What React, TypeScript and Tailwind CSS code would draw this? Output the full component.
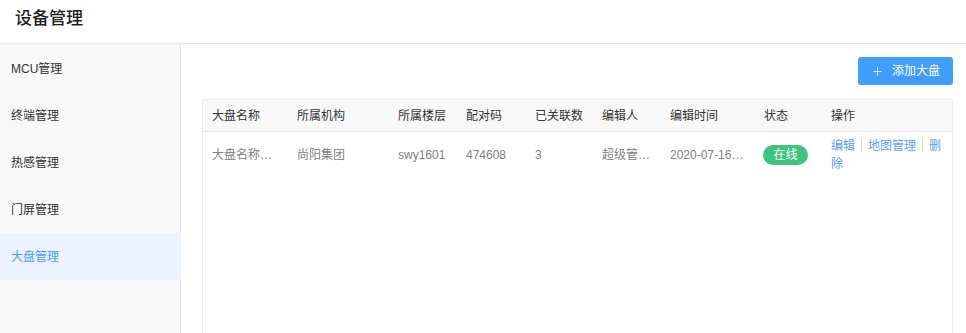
import { Plus } from "lucide-react";

const menus = ["MCU管理", "终端管理", "热感管理", "门屏管理", "大盘管理"];

const columns = [
  { title: "大盘名称", width: "w-[85px]" },
  { title: "所属机构", width: "w-[101px]" },
  { title: "所属楼层", width: "w-[68px]" },
  { title: "配对码", width: "w-[69px]" },
  { title: "已关联数", width: "w-[67px]" },
  { title: "编辑人", width: "w-[68px]" },
  { title: "编辑时间", width: "w-[94px]" },
  { title: "状态", width: "w-[67px]" },
  { title: "操作", width: "flex-1" },
];

const row = ["大盘名称大盘名称", "尚阳集团", "swy1601", "474608", "3", "超级管理员", "2020-07-16 10:20:30"];

const Separator = () => (
  <span className="mx-[6px] inline-block h-[13px] w-px bg-[#d9d9d9] align-[-2px]" />
);

const App = () => {
  return (
    <div
      className="flex h-[333px] w-[966px] flex-col overflow-hidden bg-white text-xs"
      style={{ fontFamily: '"Liberation Sans", "Noto Sans CJK SC", sans-serif' }}
    >
      <header className="flex h-[44px] shrink-0 items-center border-b border-[#e6e6e6] pl-[15px] pb-[4px]">
        <h1 className="text-[17px] font-medium text-[#1f1f1f]">设备管理</h1>
      </header>

      <div className="flex min-h-0 flex-1">
        <aside className="w-[181px] shrink-0 border-r border-[#e4e4e4] bg-[#f8f8f8] pt-[1px]">
          {menus.map((menu, index) => (
            <div
              key={menu}
              className={
                index === menus.length - 1
                  ? "-mr-px flex h-[47px] items-center bg-[#eaf3ff] pl-[11px] text-[#4d9bf7]"
                  : "flex h-[47px] items-center pl-[11px] text-[#333]"
              }
            >
              {menu}
            </div>
          ))}
        </aside>

        <main className="flex min-w-0 flex-1 flex-col pt-[13px] pr-[13px] pl-[21px]">
          <div className="flex justify-end">
            <button className="flex h-[28px] w-[95px] items-center justify-center gap-[8px] rounded-[3px] bg-[#409eff] text-[12px] text-white">
              <Plus className="h-[13px] w-[13px]" strokeWidth={1.5} />
              添加大盘
            </button>
          </div>

          <div className="mt-[14px] flex flex-1 flex-col rounded-t-[3px] border-x border-t border-[#e8eaef]">
            <div className="flex h-[32px] items-center border-b border-[#e8eaef] bg-[#f8f8f9] text-[#333]">
              {columns.map((col) => (
                <div
                  key={col.title}
                  className={`${col.width} shrink-0 whitespace-nowrap pl-[9px]`}
                >
                  {col.title}
                </div>
              ))}
            </div>

            <div className="flex items-center py-[5px] text-[#808080]">
              {row.map((cell, index) => (
                <div
                  key={cell}
                  className={`${columns[index].width} shrink-0 truncate pl-[9px] leading-[18px] ${
                    index === 5 ? "pr-[4px]" : "pr-[10px]"
                  }`}
                >
                  {cell}
                </div>
              ))}
              <div className="w-[67px] shrink-0 pl-[8px]">
                <span className="inline-flex h-[20px] w-[45px] items-center justify-center rounded-full bg-[#3fc480] text-white">
                  在线
                </span>
              </div>
              <div className="flex-1 pr-[4px] pl-[9px] leading-[18px] text-[#5d9cf8]">
                编辑
                <Separator />
                地图管理
                <Separator />
                删除
              </div>
            </div>
          </div>
        </main>
      </div>
    </div>
  );
};

export default App;
